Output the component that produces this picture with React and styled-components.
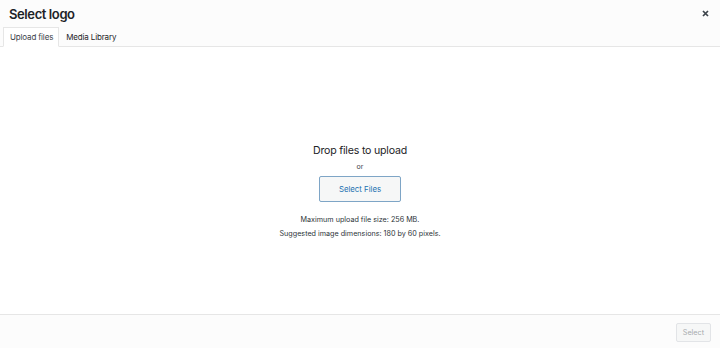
import styled, { createGlobalStyle } from "styled-components"

const GlobalStyle = createGlobalStyle`
  html, body {
    margin: 0;
    padding: 0;
    background: #fff;
  }
  body {
    font-family: Inter, "Noto Sans", sans-serif;
    color: #1d2327;
  }
`

const Modal = styled.div`
  display: flex;
  flex-direction: column;
  width: 720px;
  height: 348px;
  background: #fff;
`

const Header = styled.div`
  background: #fcfcfc;
  border-bottom: 1px solid #e6e6e6;
  padding: 0 0 0 3px;
`

const TitleRow = styled.div`
  display: flex;
  align-items: center;
  justify-content: space-between;
  height: 27px;
  padding: 0 11px 0 6px;
`

const Title = styled.h1`
  margin: 0;
  font-size: 13px;
  font-weight: 600;
  letter-spacing: -0.4px;
`

const Close = styled.button`
  border: 0;
  background: none;
  padding: 0;
  width: 8px;
  height: 8px;
  display: flex;
  align-items: center;
  justify-content: center;
  color: #3c434a;
  cursor: pointer;
`

const Tabs = styled.div`
  display: flex;
  height: 20px;
  margin-bottom: -1px;
`

const Tab = styled.div`
  display: flex;
  align-items: center;
  padding: 0 5px 0 6px;
  font-size: 8px;
  letter-spacing: -0.15px;
  color: ${(p) => (p.active ? "#3c434a" : "#1d2327")};
  background: ${(p) => (p.active ? "#fff" : "transparent")};
  border: 1px solid ${(p) => (p.active ? "#e6e6e6" : "transparent")};
  border-bottom-color: ${(p) => (p.active ? "#fff" : "transparent")};
`

const Body = styled.div`
  flex: 1;
  display: flex;
  flex-direction: column;
  align-items: center;
  justify-content: center;
  padding-top: 25px;
`

const DropTitle = styled.div`
  font-size: 10.6px;
  letter-spacing: -0.2px;
  color: #1d2327;
  margin-bottom: 5px;
`

const Or = styled.div`
  font-size: 7px;
  color: #3c434a;
  margin-bottom: 5px;
`

const SelectFiles = styled.button`
  width: 82px;
  height: 26px;
  border: 1px solid #7ea5c6;
  border-radius: 2px;
  background: #f6f7f7;
  color: #2271b1;
  font-family: Inter, "Noto Sans", sans-serif;
  font-size: 7.8px;
  margin-bottom: 13px;
`

const Info = styled.p`
  margin: 0 0 5px;
  font-size: 7.2px;
  color: #2c3338;
`

const Footer = styled.div`
  display: flex;
  justify-content: flex-end;
  align-items: center;
  height: 33px;
  padding: 0 9px;
  background: #fcfcfc;
  border-top: 1px solid #e6e6e6;
`

const SelectButton = styled.button`
  height: 19px;
  padding: 0 6px;
  border: 1px solid #e2e4e7;
  border-radius: 2px;
  background: #f6f7f7;
  color: #a7aaad;
  font-family: Inter, "Noto Sans", sans-serif;
  font-size: 7.2px;
  margin-top: 1px;
`

const App = () => {
  return (
    <Modal>
      <GlobalStyle />
      <Header>
        <TitleRow>
          <Title>Select logo</Title>
          <Close aria-label="Close">
            <svg width="7" height="7" viewBox="0 0 7 7">
              <path d="M1 1 L6 6 M6 1 L1 6" stroke="currentColor" strokeWidth="1.7" />
            </svg>
          </Close>
        </TitleRow>
        <Tabs>
          <Tab active>Upload files</Tab>
          <Tab>Media Library</Tab>
        </Tabs>
      </Header>
      <Body>
        <DropTitle>Drop files to upload</DropTitle>
        <Or>or</Or>
        <SelectFiles>Select Files</SelectFiles>
        <Info>Maximum upload file size: 256 MB.</Info>
        <Info>Suggested image dimensions: 180 by 60 pixels.</Info>
      </Body>
      <Footer>
        <SelectButton disabled>Select</SelectButton>
      </Footer>
    </Modal>
  )
}

export default App
